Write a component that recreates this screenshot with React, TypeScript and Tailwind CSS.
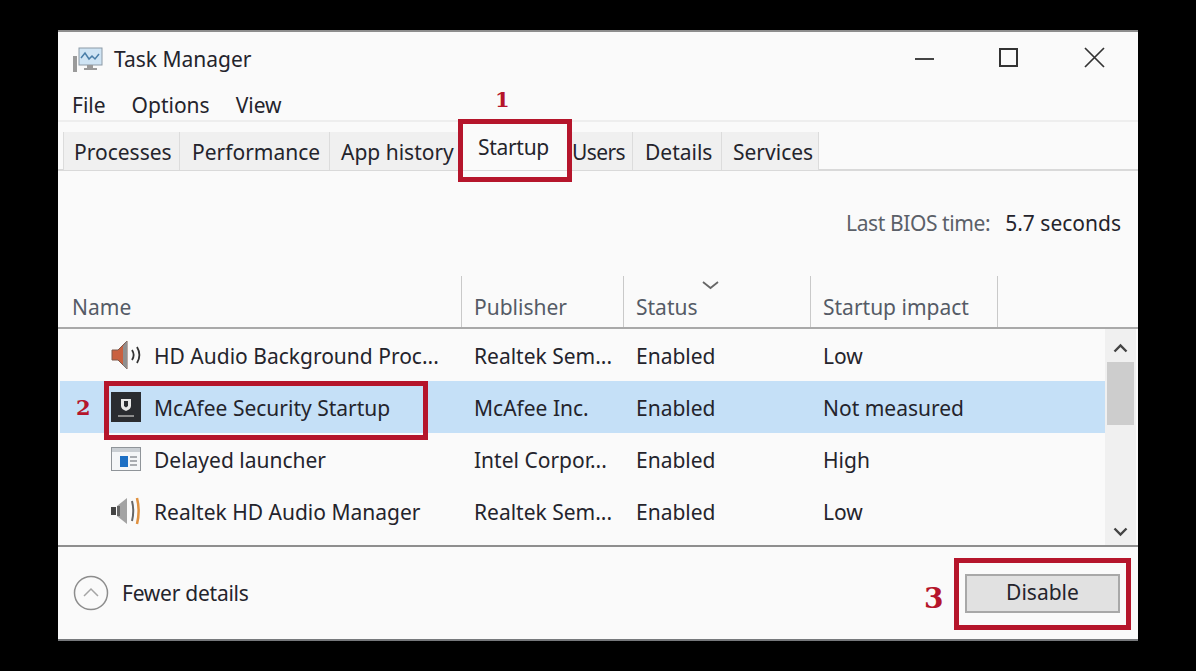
const rows = [
  { name: "HD Audio Background Proc...", publisher: "Realtek Sem...", status: "Enabled", impact: "Low", icon: "speaker" },
  { name: "McAfee Security Startup", publisher: "McAfee Inc.", status: "Enabled", impact: "Not measured", icon: "mcafee" },
  { name: "Delayed launcher", publisher: "Intel Corpor...", status: "Enabled", impact: "High", icon: "launcher" },
  { name: "Realtek HD Audio Manager", publisher: "Realtek Sem...", status: "Enabled", impact: "Low", icon: "realtek" },
];

const tabs = [
  { label: "Processes", box: "w-[117px] pl-[10px]" },
  { label: "Performance", box: "w-[151px] pl-[12px]" },
  { label: "App history", box: "w-[130px] pl-[11px]" },
];

const tabsRight = [
  { label: "Users", box: "w-[62px] pl-0 tracking-[-0.6px]" },
  { label: "Details", box: "w-[90px] pl-[12px]" },
  { label: "Services", box: "w-[98px] pl-[11px]" },
];

function RowIcon({ type }: { type: string }) {
  if (type === "speaker") {
    return (
      <svg width="32" height="32" viewBox="0 0 32 32" fill="none">
        <path d="M2 11h6l9-9v28l-9-9H2z" fill="#c9603f" stroke="#7e5a4c" strokeWidth="1" />
        <path d="M17 2v28l-4-4V7z" fill="#8f8f8f" />
        <path d="M22 11c2 3 2 7 0 10M27 8c3 5 3 11 0 16" stroke="#333" strokeWidth="1.800" />
      </svg>
    );
  }
  if (type === "mcafee") {
    return (
      <svg width="32" height="32" viewBox="0 0 32 32" fill="none">
        <rect x="1" y="1" width="30" height="30" fill="#2a2c30" />
        <path d="M11 8h10v7c0 2-2 4-5 5-3-1-5-3-5-5z" fill="#e8e8e8" />
        <path d="M14 10v5l2 1.500 2-1.500v-5z" fill="#2a2c30" />
        <rect x="8" y="24" width="16" height="2" fill="#8c8c8c" />
      </svg>
    );
  }
  if (type === "launcher") {
    return (
      <svg width="32" height="32" viewBox="0 0 32 32" fill="none">
        <rect x="1.500" y="4.500" width="29" height="23" fill="#f4f6f8" stroke="#8f9499" />
        <rect x="2" y="5" width="28" height="4" fill="#c9ced3" />
        <rect x="10" y="13" width="8" height="11" fill="#1c6fc4" />
        <path d="M20 14h7M20 18h7M20 22h7" stroke="#8f9499" strokeWidth="1.500" />
      </svg>
    );
  }
  return (
    <svg width="32" height="32" viewBox="0 0 32 32" fill="none">
      <rect x="1" y="12" width="5" height="8" fill="#444" />
      <path d="M7 11l10-8v26l-10-8z" fill="#a3a3a3" />
      <rect x="7" y="11" width="3" height="10" fill="#666" />
      <path d="M22 6c1.500 6 1.500 14 0 20" stroke="#666" strokeWidth="2" />
      <path d="M27 3c2 8 2 18 0 26" stroke="#e0913f" strokeWidth="2.500" />
    </svg>
  );
}

export default function App() {
  return (
    <div className="w-[1196px] h-[671px] bg-black pt-[30px] pl-[58px] overflow-hidden font-['Noto_Sans','Open_Sans',sans-serif] text-[21px] text-[#24242c]">
      <div className="relative w-[1080px] h-[611px] bg-[#fafafa] border-t-2 border-t-[#8d8d8d] border-b-2 border-b-[#77797c] flex flex-col">
        {/* title bar */}
        <div className="h-[50px] flex items-center shrink-0">
          <div className="ml-[15px] w-[30px] h-[28px] mt-[5px]">
            <svg width="30" height="28" viewBox="0 0 30 28" fill="none">
              <rect x="0" y="10" width="4" height="16" fill="#9a9a9a" />
              <rect x="6" y="2" width="23" height="17" fill="#cfe4f4" stroke="#8c9aa6" />
              <path d="M8 12l4-5 4 6 3-3 3 3 4-5" stroke="#4a7ea8" strokeWidth="1.500" />
              <path d="M14 19h6v3h4v2H11v-2h3z" fill="#9a9a9a" />
            </svg>
          </div>
          <span className="ml-[11px] pt-[5px]">Task Manager</span>
          <div className="ml-auto flex items-center h-[20px] mr-[33px]">
            <div className="mt-[4px] w-[19px] h-[2px] bg-[#444]" />
            <div className="ml-[65px] mt-[1px] w-[19px] h-[19px] border-2 border-[#333]" />
            <svg className="ml-[66px] mt-[1px]" width="21" height="21" viewBox="0 0 21 21">
              <path d="M1 1l19 19M20 1L1 20" stroke="#333" strokeWidth="1.700" />
            </svg>
          </div>
        </div>

        {/* menu */}
        <div className="h-[40px] flex items-center pl-[14px] pt-[10px] gap-[26px] shrink-0 border-b-2 border-b-[#eeeeee]">
          <span>File</span>
          <span>Options</span>
          <span>View</span>
        </div>

        {/* tabs */}
        <div className="mt-[10px] h-[39px] flex items-stretch shrink-0 border-b-2 border-b-[#d9d9d9]">
          <div className="ml-[5px] flex">
            {tabs.map((tab) => (
              <div
                key={tab.label}
                className={`${tab.box} h-[38px] pt-[3px] bg-[#f0f0f0] border-l border-r border-[#dcdcdc] -mr-px flex items-center whitespace-nowrap`}
              >
                {tab.label}
              </div>
            ))}
            <div className="w-[112px] h-[48px] -mt-[10px] ml-px bg-[#fafafa] border border-[#dcdcdc] border-b-0 z-10 flex items-center pl-[18px] pt-[3px] tracking-[-0.3px]">
              Startup
            </div>
            {tabsRight.map((tab) => (
              <div
                key={tab.label}
                className={`${tab.box} h-[38px] pt-[3px] bg-[#f0f0f0] border-l border-r border-[#dcdcdc] -mr-px flex items-center whitespace-nowrap`}
              >
                {tab.label}
              </div>
            ))}
          </div>
        </div>

        {/* bios time */}
        <div className="h-[105px] shrink-0 flex justify-end pt-[37px] pr-[17px]">
          <span className="text-[#5b6068] tracking-[-0.4px]">Last BIOS time:</span>
          <span className="ml-[15px]">5.7 seconds</span>
        </div>

        {/* header */}
        <div className="h-[53px] shrink-0 flex border-b-2 border-b-[#a9a9a9] text-[#555b66]">
          <div className="w-[404px] border-r border-r-[#c9c9c9] pl-[14px] pt-[16px]">Name</div>
          <div className="w-[162px] border-r border-r-[#c9c9c9] pl-[12px] pt-[16px]">Publisher</div>
          <div className="relative w-[187px] border-r border-r-[#c9c9c9] pl-[12px] pt-[16px]">
            Status
            <svg className="absolute left-[78px] top-[5px]" width="17" height="9" viewBox="0 0 17 9" fill="none">
              <path d="M1 1l7.500 6L16 1" stroke="#666" strokeWidth="1.800" />
            </svg>
          </div>
          <div className="w-[187px] border-r border-r-[#c9c9c9] pl-[12px] pt-[16px]">Startup impact</div>
        </div>

        {/* rows */}
        <div className="flex h-[218px] shrink-0 border-b-2 border-b-[#8e8e8e]">
          <div className="w-[1047px] pl-[2px] overflow-hidden">
            {rows.map((row, i) => (
              <div key={row.name} className={`h-[52px] flex items-center ${i === 1 ? "bg-[#c5e0f7]" : ""}`}>
                <div className="w-[402px] flex items-center pl-[50px] whitespace-nowrap">
                  <RowIcon type={row.icon} />
                  <span className="ml-[12px] pt-[3px]">{row.name}</span>
                </div>
                <div className="w-[162px] pl-[12px] pt-[3px]">{row.publisher}</div>
                <div className="w-[187px] pl-[12px] pt-[3px]">{row.status}</div>
                <div className="pl-[12px] pt-[3px]">{row.impact}</div>
              </div>
            ))}
          </div>
          <div className="w-[31px] bg-[#f0f0f0] flex flex-col items-center">
            <svg className="mt-[14px]" width="15" height="10" viewBox="0 0 15 10" fill="none">
              <path d="M1.500 8.500l6-6 6 6" stroke="#444" strokeWidth="2.400" />
            </svg>
            <div className="mt-[9px] w-[27px] h-[63px] bg-[#cdcdcd]" />
            <svg className="mt-auto mb-[8px]" width="15" height="10" viewBox="0 0 15 10" fill="none">
              <path d="M1.500 1.500l6 6 6-6" stroke="#444" strokeWidth="2.400" />
            </svg>
          </div>
        </div>

        {/* footer */}
        <div className="flex-1 flex items-center pl-[15px] pr-[18px]">
          <svg width="36" height="36" viewBox="0 0 36 36" fill="none">
            <circle cx="18" cy="18" r="16.500" stroke="#8d8d8d" strokeWidth="1.500" />
            <path d="M11 21l7-7 7 7" stroke="#a5a5a5" strokeWidth="1.500" />
          </svg>
          <span className="ml-[13px] pt-[2px] tracking-[-0.25px]">Fewer details</span>
          <div className="ml-auto w-[155px] h-[39px] bg-[#e1e1e1] border-2 border-[#a8a8a8] flex items-center justify-center">
            Disable
          </div>
        </div>

        {/* annotations */}
        <div className="absolute left-[400px] top-[87px] w-[114px] h-[63px] border-[5px] border-[#b5152b] z-20" />
        <div className="absolute left-[46px] top-[349px] w-[324px] h-[59px] border-[5px] border-[#b5152b] z-20" />
        <div className="absolute left-[896px] top-[526px] w-[177px] h-[72px] border-[5px] border-[#b5152b] z-20" />
        <span className="absolute left-[437px] top-[52px] z-20 font-['DejaVu_Serif',serif] font-bold text-[#b5152b] text-[21px] leading-[32px]">1</span>
        <span className="absolute left-[18px] top-[360px] z-20 font-['DejaVu_Serif',serif] font-bold text-[#b5152b] text-[21px] leading-[32px]">2</span>
        <span className="absolute left-[866px] top-[549px] z-20 font-['DejaVu_Serif',serif] font-bold text-[#b5152b] text-[28px] leading-[36px]">3</span>
      </div>
    </div>
  );
}
